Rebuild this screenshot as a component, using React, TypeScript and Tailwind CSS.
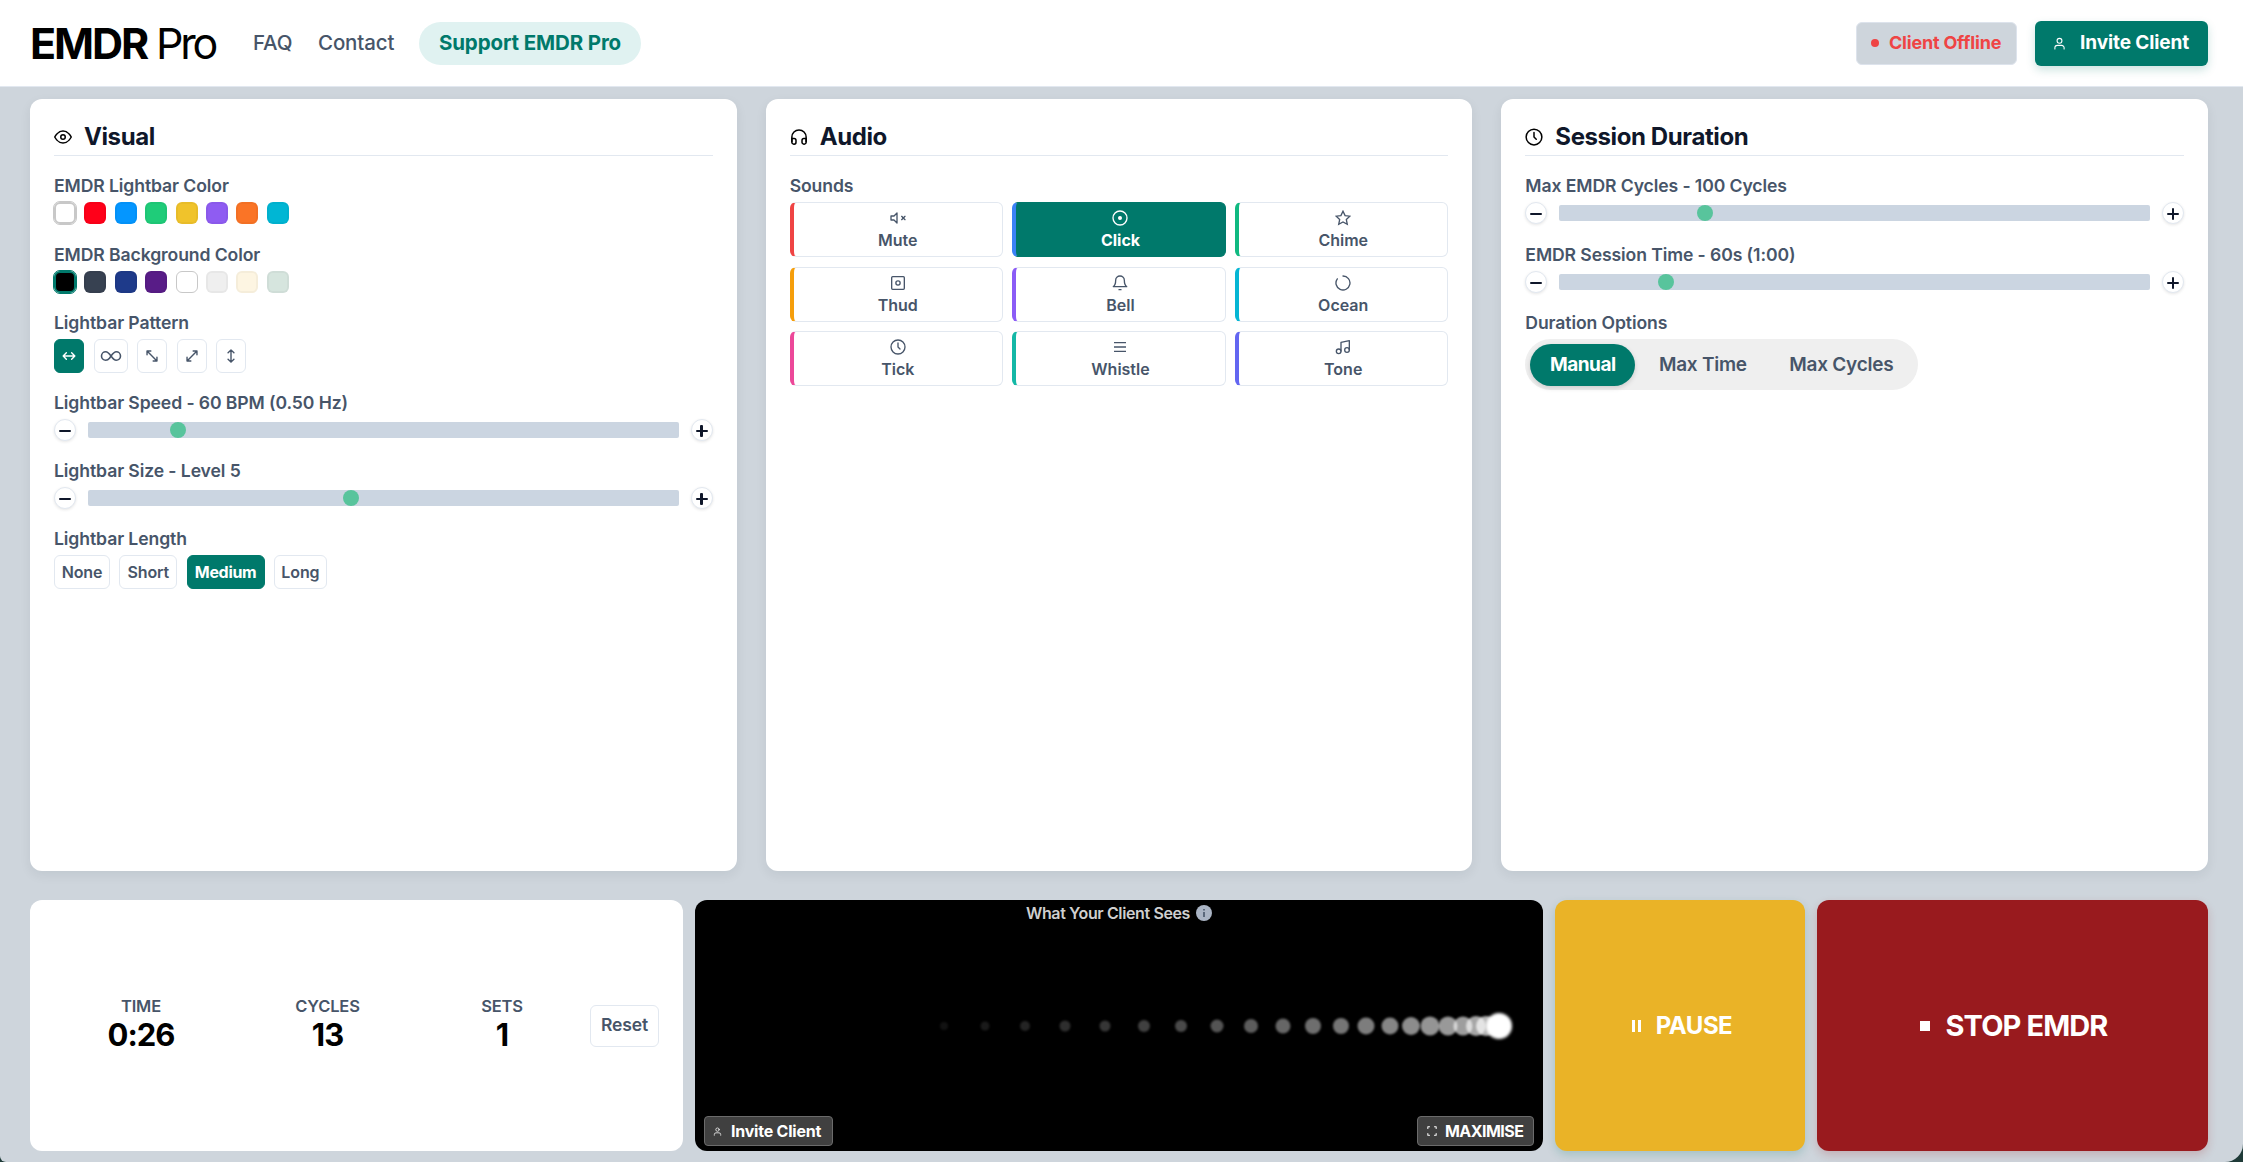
import type { ReactNode } from "react";
import clsx from "clsx";

interface IconProps {
  className?: string;
  stroke?: number;
  children: ReactNode;
}

function Icon({ className = "size-4", stroke = 2, children }: IconProps) {
  return (
    <svg
      className={clsx("shrink-0", className)}
      viewBox="0 0 24 24"
      fill="none"
      stroke="currentColor"
      strokeWidth={stroke}
      strokeLinecap="round"
      strokeLinejoin="round"
    >
      {children}
    </svg>
  );
}

const clockPaths = (
  <>
    <circle cx="12" cy="12" r="10.5" />
    <path d="M12 6v6l3 3" />
  </>
);

const userPaths = (
  <>
    <circle cx="12" cy="7" r="4.5" />
    <path d="M3.500 22v-2a4.500 4.500 0 0 1 4.500-4.500h8a4.500 4.500 0 0 1 4.500 4.500v2" />
  </>
);

const lightbarColors = [
  "bg-white",
  "bg-[#ff0019]",
  "bg-[#0496ff]",
  "bg-[#1fcc79]",
  "bg-[#f0c32b]",
  "bg-[#8f5cf2]",
  "bg-[#fa7426]",
  "bg-[#00b6d4]",
];

const backgroundColors = [
  "bg-black",
  "bg-[#374151]",
  "bg-[#1e3a8a]",
  "bg-[#581c87]",
  "bg-white",
  "bg-[#efefef]",
  "bg-[#fdf5e2]",
  "bg-[#d6e5de]",
];

const patterns = [
  { id: "horizontal", width: "w-[30px]", icon: <path d="M2 12h20M7.500 6.500L2 12l5.500 5.500M16.500 6.500L22 12l-5.500 5.500" /> },
  { id: "infinity", width: "w-[34px]", icon: null },
  { id: "diagonal-down", width: "w-[30px]", icon: <path d="M3.500 3.500l17 17M3.500 10V3.500H10M20.500 14v6.500H14" /> },
  { id: "diagonal-up", width: "w-[30px]", icon: <path d="M20.500 3.500l-17 17M14 3.500h6.500V10M3.500 14v6.500H10" /> },
  { id: "vertical", width: "w-[30px]", icon: <path d="M12 1.500v21M7 6.500l5-5 5 5M7 17.500l5 5 5-5" /> },
];

const lengths = [
  { label: "None", width: "w-14" },
  { label: "Short", width: "w-[58px]" },
  { label: "Medium", width: "w-[78px]" },
  { label: "Long", width: "w-[53px]" },
];

const sounds = [
  {
    label: "Mute",
    border: "border-l-[#ef4444]",
    icon: <path d="M10.500 4.500L6 9H1.500v6H6l4.500 4.500zM17.500 9.500l5 5M22.500 9.500l-5 5" />,
  },
  {
    label: "Click",
    border: "border-l-[#3b82f6]",
    icon: (
      <>
        <circle cx="12" cy="12" r="10.500" />
        <circle cx="12" cy="12" r="2" fill="currentColor" />
      </>
    ),
  },
  {
    label: "Chime",
    border: "border-l-[#10b981]",
    icon: <path d="M12 1.800l3.100 6.600 7.200.9-5.300 5 1.400 7.200L12 18l-6.400 3.500L7 14.300l-5.300-5 7.200-.9z" strokeLinejoin="miter" />,
  },
  {
    label: "Thud",
    border: "border-l-[#f59e0b]",
    icon: (
      <>
        <rect x="2.500" y="2.500" width="19" height="19" rx="1.500" />
        <circle cx="12" cy="12" r="3.200" />
      </>
    ),
  },
  {
    label: "Bell",
    border: "border-l-[#8b5cf6]",
    icon: <path d="M18.500 8a6.500 6.500 0 0 0-13 0c0 7-3.500 9.500-3.500 9.500h20S18.500 15 18.500 8M10.500 22h3" />,
  },
  {
    label: "Ocean",
    border: "border-l-[#06b6d4]",
    icon: <path d="M12 1.500a10.500 10.500 0 1 1-8.500 4.300" />,
  },
  { label: "Tick", border: "border-l-[#ec4899]", icon: clockPaths },
  {
    label: "Whistle",
    border: "border-l-[#14b8a6]",
    icon: <path d="M3 5.500h18M3 12h18M3 18.500h18" strokeLinecap="butt" />,
  },
  {
    label: "Tone",
    border: "border-l-[#6366f1]",
    icon: (
      <>
        <path d="M9 18V5l12.500-2.500V16" />
        <circle cx="5.500" cy="18.500" r="3.500" />
        <circle cx="18" cy="16.500" r="3.500" />
      </>
    ),
  },
];

const stats = [
  { label: "TIME", value: "0:26", width: "w-[174px]" },
  { label: "CYCLES", value: "13", width: "w-[199px]" },
  { label: "SETS", value: "1", width: "w-[150px]" },
];

// x centre inside the preview, diameter and brightness of each trail dot
const trail = [
  [249, 8, 0.07],
  [290, 9, 0.1],
  [330, 10, 0.14],
  [370, 11, 0.18],
  [410, 11, 0.21],
  [448.5, 12, 0.25],
  [486, 12, 0.29],
  [521.5, 13, 0.33],
  [555.5, 14, 0.36],
  [588, 15, 0.4],
  [618, 16, 0.43],
  [645.5, 16, 0.46],
  [671, 17, 0.49],
  [694.5, 17, 0.52],
  [716, 18, 0.55],
  [735, 19, 0.58],
  [752.5, 19, 0.6],
  [768, 19, 0.62],
  [781, 20, 0.65],
  [791, 20, 0.7],
];

function Label({ children }: { children: ReactNode }) {
  return (
    <div className="h-6 text-[17.6px] leading-6 font-semibold tracking-[-0.100px] whitespace-nowrap text-[#475569]">
      {children}
    </div>
  );
}

function PanelCard({ title, icon, children }: { title: string; icon: ReactNode; children: ReactNode }) {
  return (
    <section className="h-[772px] rounded-xl bg-white px-6 pt-5 shadow-[0_4px_12px_rgba(15,23,42,0.07)]">
      <div className="flex h-[37px] items-center border-b border-[#e2e8f0]">
        <span className="w-[30px]">{icon}</span>
        <h2 className="text-2xl font-bold tracking-[-0.400px] text-[#0f172a]">{title}</h2>
      </div>
      {children}
    </section>
  );
}

function RoundButton({ plus }: { plus?: boolean }) {
  return (
    <button className="relative flex size-[22px] shrink-0 items-center justify-center rounded-full border border-[#e2e8f0] bg-white shadow-[0_1px_3px_rgba(0,0,0,0.1)]">
      <span className="h-[2.500px] w-3 translate-y-px rounded-[1px] bg-[#0f172a]" />
      {plus && <span className="absolute h-3 w-[2.500px] translate-y-px rounded-[1px] bg-[#0f172a]" />}
    </button>
  );
}

function Slider({ value }: { value: number }) {
  return (
    <div className="flex items-center gap-3">
      <RoundButton />
      <div className="relative h-4 flex-1 rounded-[2px] bg-[#cbd5e1]">
        <span
          className="absolute top-0 size-4 -translate-x-1/2 rounded-full bg-[#58c49c]"
          style={{ left: `${value}px` }}
        />
      </div>
      <RoundButton plus />
    </div>
  );
}

function Swatches({ colors, ring }: { colors: string[]; ring: string }) {
  return (
    <div className="flex gap-[8.400px]">
      {colors.map((color, i) => (
        <button
          key={color}
          className={clsx(
            "size-[22px] rounded-md bg-clip-border",
            color,
            i === 0
              ? clsx("border-2 outline-[0.5px]", ring)
              : color === "bg-white"
                ? "border border-[#c8c8c8]"
                : "border-2 border-black/3"
          )}
        />
      ))}
    </div>
  );
}

function Header() {
  return (
    <header className="flex h-[87px] items-center border-b border-[#e2e8f0] bg-white pr-[35px] pl-[30px]">
      <div className="w-[223px] pt-px text-[43px] leading-none font-normal tracking-[-3.200px] whitespace-nowrap text-black">
        <span className="font-bold tracking-[-2.100px]">EMDR</span> Pro
      </div>
      <nav className="flex items-center text-[20.500px] font-medium tracking-[-0.150px] text-[#475569]">
        <a className="w-[65px]">FAQ</a>
        <a className="w-[101px]">Contact</a>
        <a className="flex h-[43px] w-[222px] items-center justify-center rounded-full bg-[#e0f2f1] font-bold tracking-[-0.120px] text-[#00796b]">
          Support EMDR Pro
        </a>
      </nav>
      <div className="ml-auto flex items-center gap-[18px]">
        <div className="flex h-[43px] w-[161px] items-center rounded-md border border-[#dde3ec] bg-[#ced5dc] pl-3.5 text-lg font-bold tracking-[-0.200px] whitespace-nowrap text-[#ef4444]">
          <span className="mr-2.5 size-2 rounded-full bg-[#ef4444]" />
          Client Offline
        </div>
        <button className="flex h-[45px] w-[173px] items-center rounded-md bg-[#00796b] pl-[18px] text-[19px] font-bold tracking-[-0.100px] whitespace-nowrap text-white shadow-[0_4px_10px_rgba(0,121,107,0.2)]">
          <Icon className="mr-[14px] size-[13px]">{userPaths}</Icon>
          Invite Client
        </button>
      </div>
    </header>
  );
}

function VisualPanel() {
  return (
    <PanelCard
      title="Visual"
      icon={
        <Icon className="size-[18px]">
          <path d="M1 12s4-8 11-8 11 8 11 8-4 8-11 8-11-8-11-8z" />
          <circle cx="12" cy="12" r="3" />
        </Icon>
      }
    >
      <div className="mt-[18px]">
        <Label>EMDR Lightbar Color</Label>
        <div className="mt-1">
          <Swatches colors={lightbarColors} ring="border-[#c8c8c8] outline-[#c8c8c8]" />
        </div>
      </div>
      <div className="mt-[19px]">
        <Label>EMDR Background Color</Label>
        <div className="mt-1">
          <Swatches colors={backgroundColors} ring="border-[#00796b] outline-[#00796b]" />
        </div>
      </div>
      <div className="mt-[18px]">
        <Label>Lightbar Pattern</Label>
        <div className="mt-1 flex gap-[9.500px]">
          {patterns.map(({ id, width, icon }, i) => (
            <button
              key={id}
              className={clsx(
                "flex h-[34px] items-center justify-center rounded-md border",
                width,
                i === 0
                  ? "border-[#00796b] bg-[#00796b] text-white"
                  : "border-[#e2e8f0] bg-white text-[#475569]"
              )}
            >
              {icon ? (
                <Icon className="size-3.5" stroke={2.4}>{icon}</Icon>
              ) : (
                <svg
                  viewBox="0 0 40 20"
                  className="h-2.5 w-5 shrink-0 overflow-visible"
                  fill="none"
                  stroke="currentColor"
                  strokeWidth="3.200"
                  strokeLinecap="round"
                >
                  <path d="M17 14.500C14.500 17.500 12.500 18.500 9.500 18.500a8.500 8.500 0 0 1 0-17C13 1.500 15 3 20 10S27 18.500 30.500 18.500a8.500 8.500 0 0 0 0-17C27 1.500 25 3 20 10L17 14.500" />
                </svg>
              )}
            </button>
          ))}
        </div>
      </div>
      <div className="mt-[18px]">
        <Label>Lightbar Speed - 60 BPM (0.50 Hz)</Label>
        <div className="mt-1">
          <Slider value={90} />
        </div>
      </div>
      <div className="mt-[18px]">
        <Label>Lightbar Size - Level 5</Label>
        <div className="mt-1">
          <Slider value={263} />
        </div>
      </div>
      <div className="mt-[18px]">
        <Label>Lightbar Length</Label>
        <div className="mt-1 flex gap-[9.300px]">
          {lengths.map(({ label, width }) => (
            <button
              key={label}
              className={clsx(
                "h-[34px] rounded-md border text-base whitespace-nowrap",
                width,
                label === "Medium"
                  ? "border-[#00796b] bg-[#00796b] font-bold tracking-[-0.300px] text-white"
                  : "border-[#e2e8f0] bg-white font-semibold tracking-[-0.100px] text-[#475569]"
              )}
            >
              {label}
            </button>
          ))}
        </div>
      </div>
    </PanelCard>
  );
}

function AudioPanel() {
  return (
    <PanelCard
      title="Audio"
      icon={
        <Icon className="size-[18px]">
          <path d="M2.500 18v-6a9.500 9.500 0 0 1 19 0v6" />
          <path d="M21.500 19a2.500 2.500 0 0 1-2.500 2.500h-.5A2.500 2.500 0 0 1 16 19v-2.500a2.500 2.500 0 0 1 2.500-2.500h3zM2.500 19A2.500 2.500 0 0 0 5 21.500h.5A2.500 2.500 0 0 0 8 19v-2.500A2.500 2.500 0 0 0 5.500 14h-3z" />
        </Icon>
      }
    >
      <div className="mt-[18px]">
        <Label>Sounds</Label>
      </div>
      <div className="mt-1 grid grid-cols-3 gap-[9.500px]">
        {sounds.map(({ label, border, icon }) => (
          <button
            key={label}
            className={clsx(
              "flex h-[55px] flex-col items-center rounded-md border border-l-4 pt-[7px] text-base leading-5",
              border,
              label === "Click"
                ? "border-y-[#00796b] border-r-[#00796b] bg-[#00796b] font-bold text-white"
                : "border-y-[#e2e8f0] border-r-[#e2e8f0] bg-white font-semibold text-[#475569]"
            )}
          >
            <Icon>{icon}</Icon>
            <span className="mt-1">{label}</span>
          </button>
        ))}
      </div>
    </PanelCard>
  );
}

function SessionPanel() {
  return (
    <PanelCard title="Session Duration" icon={<Icon className="size-[18px]">{clockPaths}</Icon>}>
      <div className="mt-[18px]">
        <Label>Max EMDR Cycles - 100 Cycles</Label>
        <div className="mt-1">
          <Slider value={146} />
        </div>
      </div>
      <div className="mt-[19px]">
        <Label>EMDR Session Time - 60s (1:00)</Label>
        <div className="mt-1">
          <Slider value={107} />
        </div>
      </div>
      <div className="mt-[18px]">
        <Label>Duration Options</Label>
        <div className="mt-1 flex h-[51px] w-[393px] items-center rounded-full bg-[#efefef] pl-[5px] text-[19px] font-semibold tracking-[-0.250px] whitespace-nowrap text-[#475569]">
          <button className="h-[42px] w-[105px] rounded-full bg-[#00796b] pt-0.5 font-bold tracking-[-0.500px] text-white shadow-[0_2px_5px_rgba(0,0,0,0.15)]">
            Manual
          </button>
          <button className="w-[135px] pt-0.5">Max Time</button>
          <button className="w-[142px] pt-0.5">Max Cycles</button>
        </div>
      </div>
    </PanelCard>
  );
}

function StatsCard() {
  return (
    <section className="flex w-[653px] items-center rounded-xl bg-white pl-6">
      {stats.map(({ label, value, width }) => (
        <div key={label} className={clsx("flex flex-col items-center", width)}>
          <span className="mt-px text-[16.500px] leading-5 font-semibold tracking-[-0.150px] text-[#475569]">{label}</span>
          <span className="mt-px mb-[3px] text-[31px] leading-9 font-bold tracking-[-1px] text-black">{value}</span>
        </div>
      ))}
      <button className="ml-[13px] h-[42px] w-[69px] rounded-md border border-[#e2e8f0] text-[17.500px] font-semibold tracking-[-0.100px] text-[#475569]">
        Reset
      </button>
    </section>
  );
}

function ClientPreview() {
  return (
    <section className="relative w-[848px] overflow-hidden rounded-xl bg-black">
      <div className="flex h-[26px] items-center justify-center gap-1.5 text-base font-semibold tracking-[-0.380px] text-[#cfcfcf]">
        What Your Client Sees
        <svg viewBox="0 0 16 16" className="size-4">
          <circle cx="8" cy="8" r="8" fill="#aab4c4" />
          <path d="M8 7v5M8 4v1.500" stroke="#475569" strokeWidth="1.600" />
        </svg>
      </div>
      {trail.map(([x, size, opacity]) => (
        <span
          key={x}
          className="absolute top-[125.500px] -translate-1/2 rounded-full bg-white blur-[1px]"
          style={{ left: x, width: size, height: size, opacity }}
        />
      ))}
      <span className="absolute top-[125.500px] left-[803.500px] size-[26px] -translate-1/2 rounded-full bg-white blur-[1.500px]" />
      <button className="absolute bottom-[5px] left-[9px] flex h-[30px] w-[129px] items-center rounded-[4px] border border-[#6b6b6b] bg-[#404040] pl-2 text-base font-bold tracking-[-0.220px] whitespace-nowrap text-white">
        <Icon className="mr-[9px] size-[9px]">{userPaths}</Icon>
        Invite Client
      </button>
      <button className="absolute right-[9px] bottom-[5px] flex h-[30px] w-[117px] items-center rounded-[4px] border border-[#6b6b6b] bg-[#404040] pl-[9px] text-base font-bold tracking-[-0.550px] whitespace-nowrap text-white">
        <Icon className="mr-2 size-[10px]" stroke={2.5}>
          <path d="M2 6V2h4M18 2h4v4M22 18v4h-4M6 22H2v-4" />
        </Icon>
        MAXIMISE
      </button>
    </section>
  );
}

export default function App() {
  return (
    <div className="h-[1162px] w-[2243px] overflow-hidden bg-[#1f3b38] font-[Inter,sans-serif]">
      <div className="h-full rounded-br-[18px] rounded-bl-[6px] bg-[#ced5dc]">
        <Header />
        <main className="pt-3 pr-[35px] pl-[30px]">
          <div className="grid grid-cols-3 gap-[29px]">
            <VisualPanel />
            <AudioPanel />
            <SessionPanel />
          </div>
          <div className="mt-[29px] flex h-[251px] gap-3">
            <StatsCard />
            <ClientPreview />
            <button className="flex w-[250px] items-center justify-center gap-[15px] rounded-xl bg-[#eab327] pl-1 text-2xl font-bold tracking-[-0.500px] text-white shadow-[0_4px_10px_rgba(0,121,107,0.2)]">
              <span className="flex gap-[3px]">
                <span className="h-3 w-[3px] bg-white" />
                <span className="h-3 w-[3px] bg-white" />
              </span>
              PAUSE
            </button>
            <button className="flex flex-1 items-center justify-center gap-4 rounded-xl bg-[#991a1e] pl-0.5 text-[29px] font-bold tracking-[-0.900px] text-white shadow-[0_4px_10px_rgba(153,27,27,0.2)]">
              <span className="size-2.5 bg-white" />
              STOP EMDR
            </button>
          </div>
        </main>
      </div>
    </div>
  );
}
